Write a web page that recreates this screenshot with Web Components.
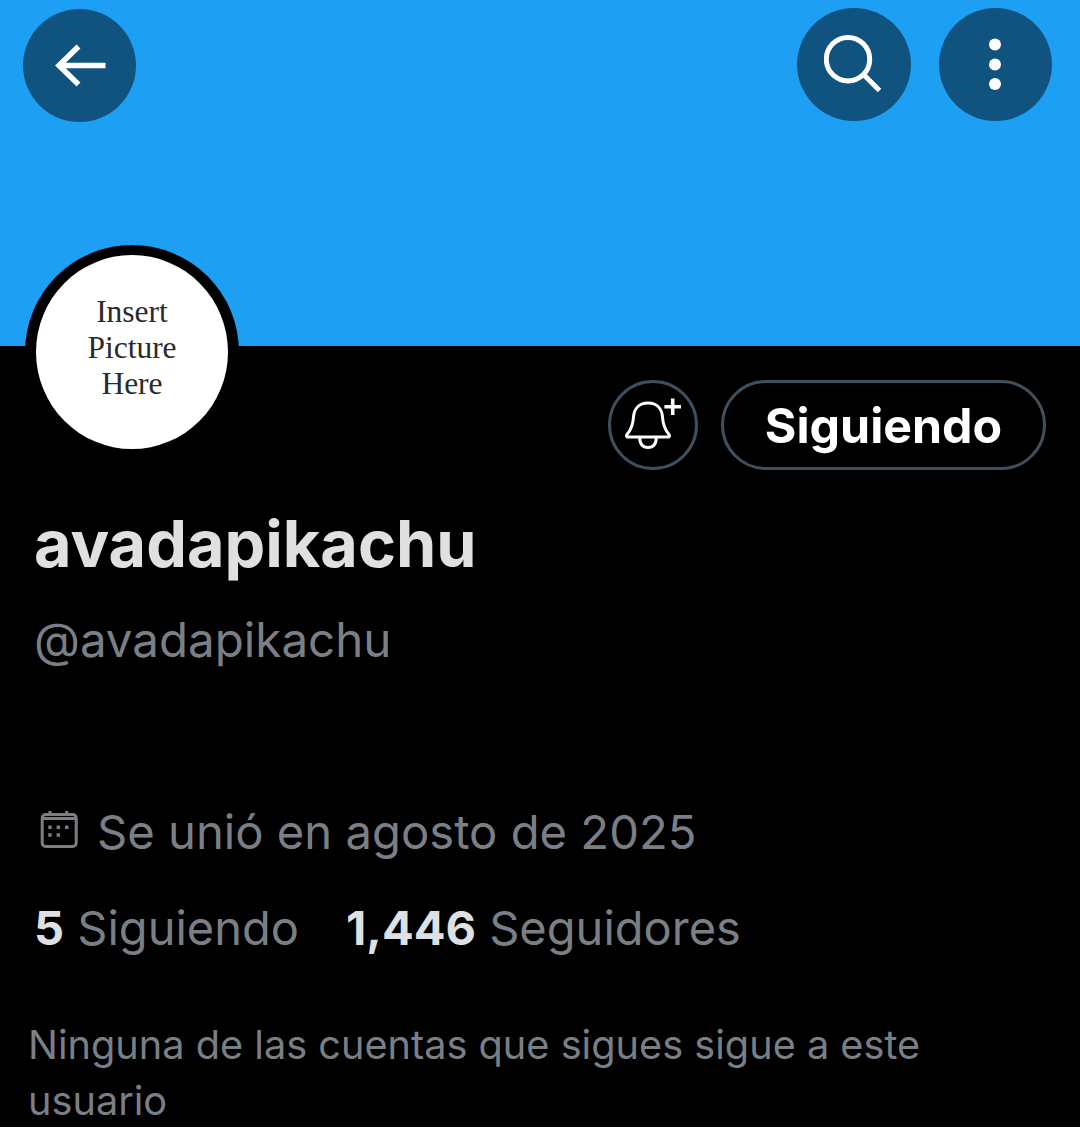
<!DOCTYPE html>
<html lang="es">
<head>
<meta charset="utf-8">
<title>avadapikachu</title>
<style>
  html, body { margin: 0; background: #000; }
  body { font-family: "Inter", "Roboto", sans-serif; height: 1127px; overflow: hidden; }
</style>
</head>
<body>
<profile-page></profile-page>
<script>
  // Boton redondo del banner, el icono entra por el slot
  class RoundButton extends HTMLElement {
    constructor() {
      super();
      this.attachShadow({ mode: "open" });
      this.shadowRoot.innerHTML = `
        <style>
          :host {
            display: flex;
            align-items: center;
            justify-content: center;
            width: 113px;
            height: 113px;
            border-radius: 50%;
            background: #10537f;
          }
        </style>
        <slot></slot>
      `;
    }
  }

  class ProfileBanner extends HTMLElement {
    constructor() {
      super();
      this.attachShadow({ mode: "open" });
      this.shadowRoot.innerHTML = `
        <style>
          :host {
            display: flex;
            justify-content: space-between;
            box-sizing: border-box;
            height: 346px;
            padding: 8px 28px 0 23px;
            background: #1d9ff4;
          }
          .right { display: flex; gap: 28px; }
          svg { display: block; fill: none; stroke: #fff; }
          round-button.back { margin-top: 1px; }
          round-button.search { width: 114px; }
        </style>
        <round-button class="back">
          <svg width="60" height="60" viewBox="0 0 60 60" stroke-width="5.5">
            <path d="M8.5 29.5H55.5M28.5 10.5L9 29.5L28.5 48.5"/>
          </svg>
        </round-button>
        <div class="right">
          <round-button class="search">
            <svg width="60" height="60" viewBox="0 0 60 60" stroke-width="5">
              <circle cx="24" cy="24.2" r="21.7"/>
              <path d="M40 40L55.5 55.5"/>
            </svg>
          </round-button>
          <round-button>
            <svg width="60" height="60" viewBox="0 0 60 60" style="fill:#fff;stroke:none">
              <circle cx="29" cy="9.5" r="6"/>
              <circle cx="29" cy="29.5" r="6"/>
              <circle cx="29" cy="49" r="6"/>
            </svg>
          </round-button>
        </div>
      `;
    }
  }

  // Avatar: va encima del banner y del fondo negro
  class ProfileAvatar extends HTMLElement {
    constructor() {
      super();
      this.attachShadow({ mode: "open" });
      this.shadowRoot.innerHTML = `
        <style>
          :host {
            display: block;
            position: absolute;
            left: 25px;
            top: 245px;
            width: 214px;
            height: 214px;
            border-radius: 50%;
            background: #000;
          }
          .pic {
            position: absolute;
            left: 11px;
            top: 10px;
            width: 192px;
            height: 194px;
            border-radius: 50%;
            background: #fff;
            display: flex;
            flex-direction: column;
            align-items: center;
            justify-content: center;
            font: 31.5px/36px "Liberation Serif", serif;
            color: #2a2a2a;
            padding-bottom: 8px;
            box-sizing: border-box;
          }
        </style>
        <div class="pic">
          <span>Insert</span>
          <span>Picture</span>
          <span>Here</span>
        </div>
      `;
    }
  }

  class ProfileActions extends HTMLElement {
    constructor() {
      super();
      this.attachShadow({ mode: "open" });
      this.shadowRoot.innerHTML = `
        <style>
          :host {
            display: flex;
            justify-content: flex-end;
            gap: 23px;
            padding: 34px 34px 0 0;
          }
          .bell, .follow {
            box-sizing: border-box;
            height: 90px;
            border: 3px solid #3e4f5e;
            border-radius: 45px;
            display: flex;
            align-items: center;
            justify-content: center;
          }
          .bell { width: 90px; }
          .follow {
            width: 325px;
            color: #fff;
            font-weight: 700;
            font-size: 48.3px;
          }
          svg { display: block; fill: none; stroke: #fff; stroke-width: 3; }
        </style>
        <div class="bell">
          <svg width="56" height="56" viewBox="0 0 56 56">
            <path d="M23 6C13 6 9 13 8.5 20C8 28 6 33 2 37.5C1 39 1.6 40 3 40H43C44.4 40 45 39 44 37.5C40 33 38 28 37.5 20C37 13 33 6 23 6Z"/>
            <path d="M14.7 40C14.7 47 18 50.5 23 50.5C28 50.5 31.3 47 31.3 40"/>
            <path d="M47.7 1.5V18M39.4 9.7H56" stroke-width="3.6"/>
          </svg>
        </div>
        <div class="follow">Siguiendo</div>
      `;
    }
  }

  class ProfileInfo extends HTMLElement {
    constructor() {
      super();
      this.attachShadow({ mode: "open" });
      this.shadowRoot.innerHTML = `
        <style>
          :host {
            display: block;
            padding: 0 0 0 34px;
            color: #7a7f86;
          }
          .name {
            margin-top: 38px;
            color: #dfe0e1;
            font-size: 64.7px;
            line-height: 72px;
            font-weight: 700;
          }
          .handle {
            margin-top: 32px;
            font-size: 47.5px;
            line-height: 56px;
          }
          .joined {
            display: flex;
            align-items: center;
            margin-top: 136px;
            font-size: 47.2px;
            line-height: 56px;
          }
          .joined svg { display: block; margin: 0 18px 4px 5px; }
          .stats {
            display: flex;
            gap: 47px;
            margin-top: 40px;
            font-size: 47px;
            line-height: 56px;
          }
          .stats b { color: #dfe0e1; font-weight: 700; }
          .mutual {
            margin: 61px 100px 0 -6px;
            font-size: 39.7px;
            line-height: 56px;
          }
        </style>
        <div class="name">avadapikachu</div>
        <div class="handle">@avadapikachu</div>
        <div class="joined">
          <svg width="40" height="40" viewBox="0 0 40 40" fill="none" stroke="#7a7f86" stroke-width="3">
            <rect x="3.2" y="4.5" width="34" height="32" rx="3.5"/>
            <path d="M11 1V6M27.7 1V6M3 8.5H37"/>
            <path d="M9.3 17.3h3.4M17.6 17.3h3.4M26 17.3h3.4M9.3 25h3.4M17.6 25h3.4" stroke-width="3.6"/>
          </svg>
          Se unió en agosto de 2025
        </div>
        <div class="stats">
          <span><b>5</b> Siguiendo</span>
          <span><b>1,446</b> Seguidores</span>
        </div>
        <div class="mutual">Ninguna de las cuentas que sigues sigue a este usuario</div>
      `;
    }
  }

  class ProfilePage extends HTMLElement {
    constructor() {
      super();
      this.attachShadow({ mode: "open" });
      this.shadowRoot.innerHTML = `
        <style>
          :host { display: block; position: relative; }
        </style>
        <profile-banner></profile-banner>
        <profile-avatar></profile-avatar>
        <profile-actions></profile-actions>
        <profile-info></profile-info>
      `;
    }
  }

  customElements.define("round-button", RoundButton);
  customElements.define("profile-banner", ProfileBanner);
  customElements.define("profile-avatar", ProfileAvatar);
  customElements.define("profile-actions", ProfileActions);
  customElements.define("profile-info", ProfileInfo);
  customElements.define("profile-page", ProfilePage);
</script>
</body>
</html>
